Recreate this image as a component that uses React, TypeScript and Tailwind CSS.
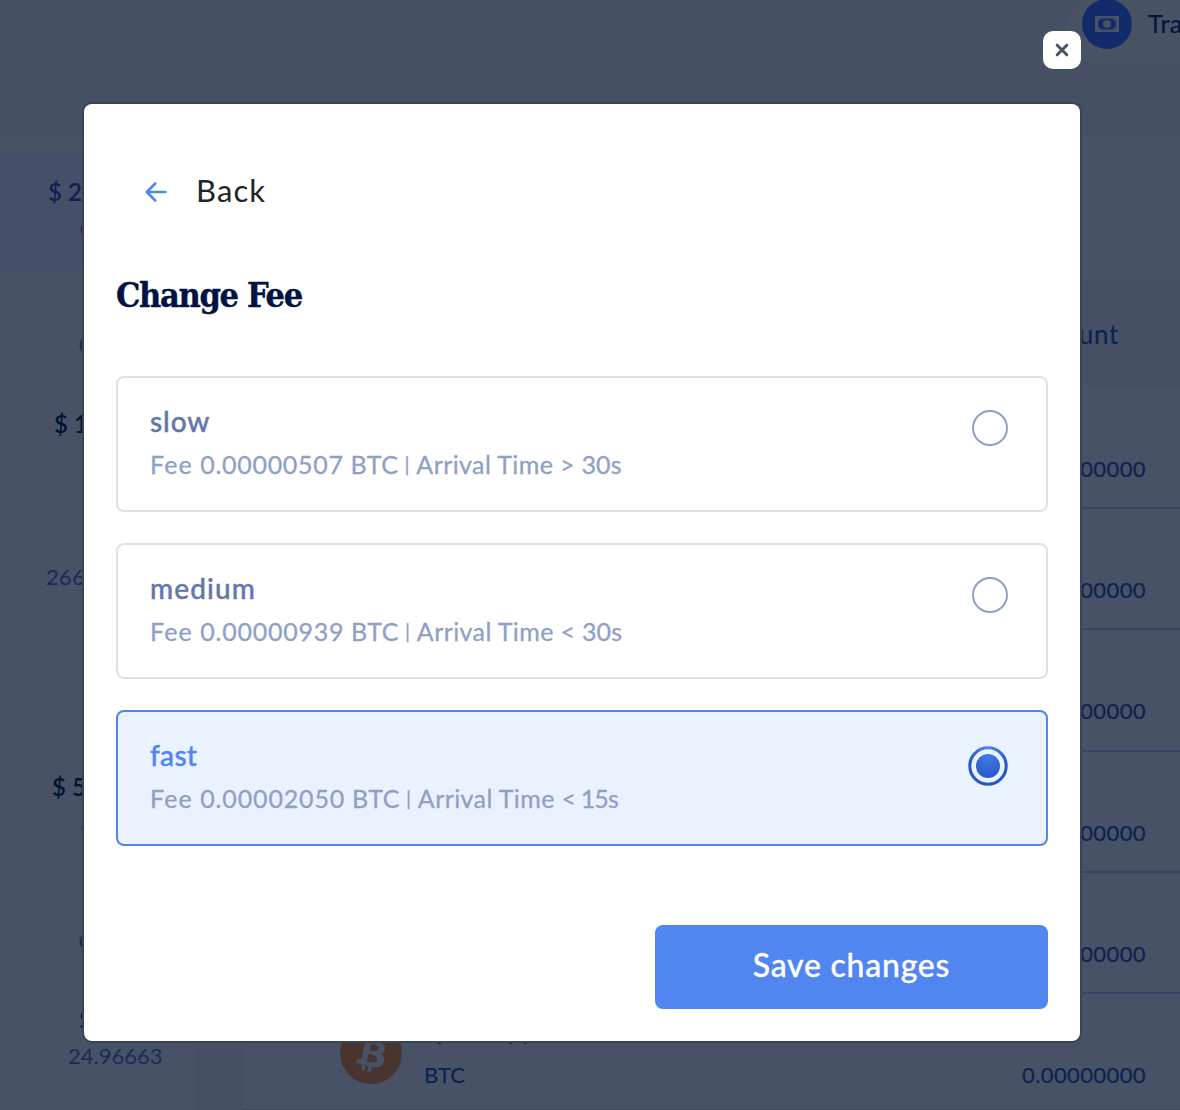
import React from "react";

type Fee = {
  name: string;
  nameSpacing: string;
  amount: string;
  amountSpacing: string;
  time: string;
  timeSpacing: string;
  selected?: boolean;
};

const fees: Fee[] = [
  {
    name: "slow",
    nameSpacing: "tracking-[0.9px]",
    amount: "0.00000507",
    amountSpacing: "tracking-[0.7px]",
    time: "> 30s",
    timeSpacing: "tracking-[0.2px]",
  },
  {
    name: "medium",
    nameSpacing: "tracking-[1.1px]",
    amount: "0.00000939",
    amountSpacing: "tracking-[0.75px]",
    time: "< 30s",
    timeSpacing: "tracking-[0.2px]",
  },
  {
    name: "fast",
    nameSpacing: "tracking-[0.3px]",
    amount: "0.00002050",
    amountSpacing: "tracking-[0.85px]",
    time: "< 15s",
    timeSpacing: "tracking-[-0.9px]",
    selected: true,
  },
];

function Radio({ selected }: { selected?: boolean }) {
  if (!selected) {
    return <span className="mr-[38px] mt-[32px] block size-9 shrink-0 rounded-full border-2 border-[#8fa0c6]" />;
  }
  return (
    <svg className="mr-[38px] mt-[34px] size-10 shrink-0" viewBox="0 0 40 40">
      <defs>
        <radialGradient id="ring" cx="0.5" cy="0" r="0.65">
          <stop offset="0" stopColor="#5185f0" />
          <stop offset="1" stopColor="#2457c8" />
        </radialGradient>
        <radialGradient id="dot" cx="0.5" cy="0.1" r="0.8">
          <stop offset="0" stopColor="#4579e8" />
          <stop offset="1" stopColor="#2a5ccd" />
        </radialGradient>
      </defs>
      <circle cx="20" cy="20" r="18.2" fill="#ebf2ff" stroke="url(#ring)" strokeWidth="3" />
      <circle cx="20" cy="20" r="12" fill="url(#dot)" />
    </svg>
  );
}

function FeeCard({ fee }: { fee: Fee }) {
  return (
    <div
      className={`flex h-[136px] justify-between rounded-lg border-2 ${
        fee.selected ? "border-[#5185f0] bg-[#ebf2ff]" : "border-[#dee1e7] bg-white"
      }`}
    >
      <div className="pl-8 pt-[23px]">
        <div
          className={`h-11 text-[28px] font-medium leading-[40px] [-webkit-text-stroke:0.4px] ${fee.nameSpacing} ${
            fee.selected ? "text-[#5185f0]" : "text-[#6278aa]"
          }`}
        >
          {fee.name}
        </div>
        <div className="whitespace-nowrap text-[25px] leading-[39px] tracking-[0.5px] text-[#8fa0c6] [-webkit-text-stroke:0.3px]">
          <span className="tracking-[1.1px]">Fee </span>
          <span className={fee.amountSpacing}>{fee.amount}</span> BTC{" "}
          <span className="-ml-px mr-[1px] inline-block align-[2px] text-[20px] leading-none tracking-[-1px]">|</span>{" "}
          <span className="tracking-[0.4px]">Arrival Time </span>
          <span className={fee.timeSpacing}>{fee.time}</span>
        </div>
      </div>
      <Radio selected={fee.selected} />
    </div>
  );
}

function Sidebar() {
  return (
    <aside className="h-[972px] w-[194px] shrink-0 whitespace-nowrap bg-[#475266] pt-[15px] text-[#1a2c54]">
      <div className="h-[117px] bg-[#464f69] pt-[22px]">
        <div className="pl-[48px] text-[24px] font-semibold leading-[34px] text-[#0d2250]">$ 2,450.18</div>
        <div className="pl-[80px] text-[22px] leading-[40px]">0.06821</div>
      </div>
      <div className="h-[137px] pl-[79px] pt-[59px] text-[22px] leading-[32px]">0.00000</div>
      <div className="h-[136px] pl-[54px] text-[24px] font-semibold leading-[34px] text-[#021232]">
        $ 1,204.50
        <div className="pl-[27px] text-[22px] font-normal leading-[40px] text-[#1a2c54]">520.11</div>
      </div>
      <div className="h-[227px] pl-[46px] pt-[18px] text-[22px] leading-[32px] tracking-[0.3px]">266.40012</div>
      <div className="h-[155px] pl-[52px] text-[24px] font-semibold leading-[34px] text-[#021232]">
        $ 512.09
        <div className="pl-[28px] text-[22px] font-normal leading-[40px] text-[#1a2c54]">3.20815</div>
      </div>
      <div className="h-[78px] pl-[79px] text-[22px] leading-[32px]">0.00000</div>
      <div className="pl-[79px] text-[24px] font-semibold leading-[34px] text-[#021232]">$ 24.97</div>
      <div className="pl-[68px] pt-[3px] text-[22px] leading-[32px]">24.96663</div>
    </aside>
  );
}

function BitcoinLogo() {
  return (
    <svg className="size-[62px] shrink-0" viewBox="0 0 32 32">
      <circle cx="16" cy="16" r="16" fill="#49342f" />
      <path
        fill="#475266"
        d="M23.189 14.02c.314-2.096-1.283-3.223-3.465-3.975l.708-2.84-1.728-.43-.69 2.765c-.454-.114-.92-.22-1.385-.326l.695-2.783L15.596 6l-.708 2.839c-.376-.086-.746-.17-1.104-.26l.002-.009-2.384-.595-.46 1.846s1.283.294 1.256.312c.7.175.826.638.805 1.006l-.806 3.235c.048.012.11.03.18.057l-.183-.045-1.13 4.532c-.086.212-.303.531-.793.41.018.025-1.256-.313-1.256-.313l-.858 1.978 2.25.561c.418.105.828.215 1.231.318l-.715 2.872 1.727.43.708-2.84c.472.127.93.245 1.378.357l-.706 2.828 1.728.43.715-2.866c2.948.558 5.164.333 6.097-2.333.752-2.146-.037-3.385-1.588-4.192 1.13-.26 1.98-1.003 2.207-2.538zm-3.95 5.538c-.533 2.147-4.148.986-5.32.695l.95-3.805c1.172.293 4.929.872 4.37 3.11zm.535-5.569c-.487 1.953-3.495.96-4.47.717l.86-3.45c.975.243 4.118.696 3.61 2.733z"
      />
    </svg>
  );
}

const rowHeights = ["h-[121px]", "h-[121px]", "h-[122px]", "h-[121px]", "h-[121px]"];

function Dashboard() {
  return (
    <div className="flex h-full flex-col bg-[#475266]">
      <header className="flex h-[138px] shrink-0 justify-end bg-[#455064]">
        <div className="flex h-16 w-[114px] overflow-hidden rounded-bl-[28px] rounded-tl-[28px] bg-[#485265] pl-4">
          <span className="-mt-px flex size-[50px] shrink-0 items-center justify-center rounded-full bg-[#132b6a]">
            <svg width="24" height="16" viewBox="0 0 24 16">
              <rect width="24" height="16" fill="#475266" />
              <path
                fill="#132b6a"
                fillRule="evenodd"
                d="M6 2.5h12l3 3v5l-3 3H6l-3-3v-5zM12 4a4 4 0 1 0 0 8a4 4 0 0 0 0-8z"
              />
            </svg>
          </span>
          <span className="ml-4 mt-[5px] text-[25px] leading-[36px] tracking-[0.4px] text-[#021441] [-webkit-text-stroke:0.2px]">
            Transfer
          </span>
        </div>
      </header>
      <div className="flex grow overflow-hidden">
        <Sidebar />
        <div className="w-12 shrink-0 bg-[#455064]" />
        <main className="flex grow flex-col text-right text-[#0d2250]">
          <div className="mt-[144px] h-[106px] shrink-0 bg-[#455064] pr-[61px] pt-[34px] text-[26px] leading-[36px] tracking-[0.7px] [-webkit-text-stroke:0.2px]">
            Amount
          </div>
          {rowHeights.map((height, i) => (
            <div
              key={i}
              className={`${height} shrink-0 border-b-2 border-[#354665] pr-[34px] pt-[65px] text-[22px] leading-[32px] tracking-[0.4px] [-webkit-text-stroke:0.2px]`}
            >
              0.00000000
            </div>
          ))}
          <div className="flex h-[116px] shrink-0 border-b border-[#3e485c] pl-[98px] pr-[34px]">
            <div className="mt-[28px]">
              <BitcoinLogo />
            </div>
            <div className="ml-[22px] mt-[20px] text-left">
              <div className="text-[24px] leading-[34px] text-[#021441]">Spot Copy</div>
              <div className="mt-[11px] text-[22px] leading-[32px] [-webkit-text-stroke:0.2px]">BTC</div>
            </div>
            <div className="ml-auto mt-[65px] text-[22px] leading-[32px] tracking-[0.4px] [-webkit-text-stroke:0.2px]">
              0.00000000
            </div>
          </div>
        </main>
      </div>
    </div>
  );
}

export default function App() {
  return (
    <div className="relative h-[1110px] w-[1180px] overflow-hidden font-['Lato','Liberation_Sans',sans-serif]">
      <Dashboard />
      <button className="absolute left-[1043px] top-[31px] flex size-[38px] items-center justify-center rounded-[10px] bg-white">
        <svg width="14" height="14" viewBox="0 0 14 14" fill="none" stroke="#475266" strokeWidth="3" strokeLinecap="round">
          <path d="M2.2 2.2l9.6 9.6M11.8 2.2L2.2 11.8" />
        </svg>
      </button>
      <div
        role="dialog"
        className="absolute left-[84px] top-[104px] flex h-[937px] w-[996px] flex-col rounded-lg bg-white px-8 shadow-[0_0_0_2px_#3a4253]"
      >
        <div className="mt-[66px] flex h-10 items-center pl-[29px]">
          <svg
            className="mt-1"
            width="22"
            height="20"
            viewBox="0 0 22 20"
            fill="none"
            stroke="#5185f0"
            strokeWidth="2.6"
            strokeLinecap="round"
            strokeLinejoin="round"
          >
            <path d="M20.5 10H2M10.3 1.5L1.8 10l8.5 8.5" />
          </svg>
          <span className="ml-[29px] text-[31px] leading-[40px] tracking-[1.1px] text-[#212529]">Back</span>
        </div>
        <h1 className="mt-[61px] h-12 whitespace-nowrap font-['DejaVu_Serif_Condensed','DejaVu_Serif',serif] text-[34px] font-bold leading-[48px] tracking-[-1.3px] text-[#001341] [-webkit-text-stroke:0.4px] [font-stretch:condensed]">
          Change Fee
        </h1>
        <div className="mt-[57px] flex flex-col gap-[31px]">
          {fees.map((fee) => (
            <FeeCard key={fee.name} fee={fee} />
          ))}
        </div>
        <button className="mt-[79px] h-[84px] w-[393px] self-end rounded-lg bg-[#5185f0] pb-1 text-[32px] font-medium tracking-[0.75px] text-white [-webkit-text-stroke:0.3px]">
          Save changes
        </button>
      </div>
    </div>
  );
}
